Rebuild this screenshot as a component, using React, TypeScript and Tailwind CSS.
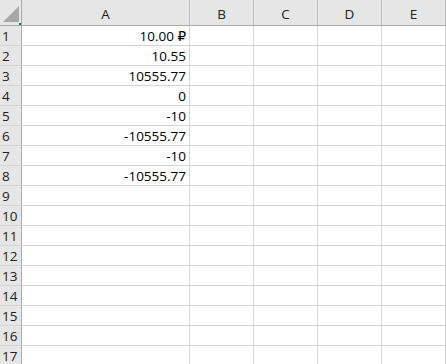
const columns = ['A', 'B', 'C', 'D', 'E'];
const values: string[] = ['10.00 ₽', '10.55', '10555.77', '0', '-10', '-10555.77', '-10', '-10555.77'];
const rowCount = 17;

const colWidth = (i: number) => (i === 0 ? 'w-[168px]' : 'w-[64px]');

export default function App() {
  return (
    <div className="w-[446px] h-[364px] overflow-hidden bg-white text-black" style={{ fontFamily: '"Open Sans", "DejaVu Sans", sans-serif' }}>
      {/* column headers */}
      <div className="flex h-[26px] bg-[#e6e6e6] border-b border-[#ababab]">
        <div className="relative w-[22px] h-[25px] shrink-0 border-r border-[#ababab] flex items-end justify-end pr-[2px] pb-[3px]">
          {/* select-all triangle */}
          <svg width="16" height="16" viewBox="0 0 16 16" className="block shrink-0">
            <path d="M16 0 L16 16 L0 16 Z" fill="#a8a8a8" />
          </svg>
          <div className="absolute right-0 bottom-0 w-[2px] h-[2px] bg-[#217346]" />
        </div>
        {columns.map((c, i) => (
          <div
            key={c}
            className={`${colWidth(i)} shrink-0 border-r border-[#bdbdbd] flex items-center justify-center text-[13.5px] text-[#222] pt-[3px]`}
          >
            {c}
          </div>
        ))}
      </div>
      {/* rows */}
      {Array.from({ length: rowCount }).map((_, r) => (
        <div key={r} className="flex h-[20px]">
          <div className="w-[22px] shrink-0 bg-[#e6e6e6] border-r border-[#ababab] border-b border-b-[#d4d4d4] flex items-center pl-[2px] pt-[2px] text-[13.5px] leading-none text-[#222]">
            {r + 1}
          </div>
          {columns.map((c, i) => (
            <div
              key={c}
              className={`${colWidth(i)} shrink-0 border-r border-b border-[#d4d4d4] flex items-center justify-end pr-[3px] pt-[2px] text-[13.5px] leading-none`}
            >
              {i === 0 ? values[r] ?? '' : ''}
            </div>
          ))}
        </div>
      ))}
    </div>
  );
}
